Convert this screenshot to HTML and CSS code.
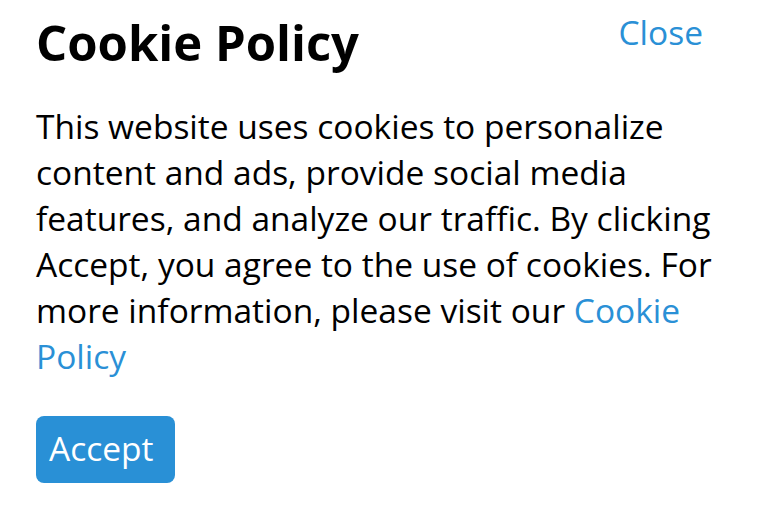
FILE: index.html
```html
<!DOCTYPE html>
<html>
<head>
<meta charset="utf-8">
<link rel="stylesheet" href="styles.css">
</head>
<body>
<div class="dialog">
  <div class="header">
    <h1 class="title">Cookie Policy</h1>
    <a class="close" href="#">Close</a>
  </div>
  <p class="text">This website uses cookies to personalize content and ads, provide social media features, and analyze our traffic. By clicking Accept, you agree to the use of cookies. For more information, please visit our <a class="link" href="#">Cookie Policy</a></p>
  <button class="accept">Accept</button>
</div>
</body>
</html>
```

FILE: styles.css
```css
html, body {
  margin: 0;
  padding: 0;
  background: #fff;
}
body {
  font-family: "Open Sans", sans-serif;
  color: #000;
}
.dialog {
  padding: 10px 36px 0 36px;
  width: 696px;
}
.header {
  display: flex;
  justify-content: space-between;
  align-items: flex-start;
}
.title {
  margin: 0;
  font-size: 49px;
  font-weight: 700;
  line-height: 64px;
}
.close {
  font-size: 33.5px;
  line-height: 44px;
  color: #2a90d6;
  text-decoration: none;
  margin-right: 29px;
}
.text {
  margin: 29px 0 0 0;
  font-size: 33.5px;
  line-height: 46px;
  width: 690px;
}
.link {
  color: #2a90d6;
  text-decoration: none;
}
.accept {
  display: block;
  margin-top: 37px;
  font-family: "Open Sans", sans-serif;
  font-size: 33.5px;
  line-height: 60px;
  color: #fff;
  background: #2990d6;
  border: none;
  border-radius: 8px;
  width: 139px;
  height: 67px;
  padding: 0 0 4px 13px;
  text-align: left;
  -webkit-appearance: none;
}
```
